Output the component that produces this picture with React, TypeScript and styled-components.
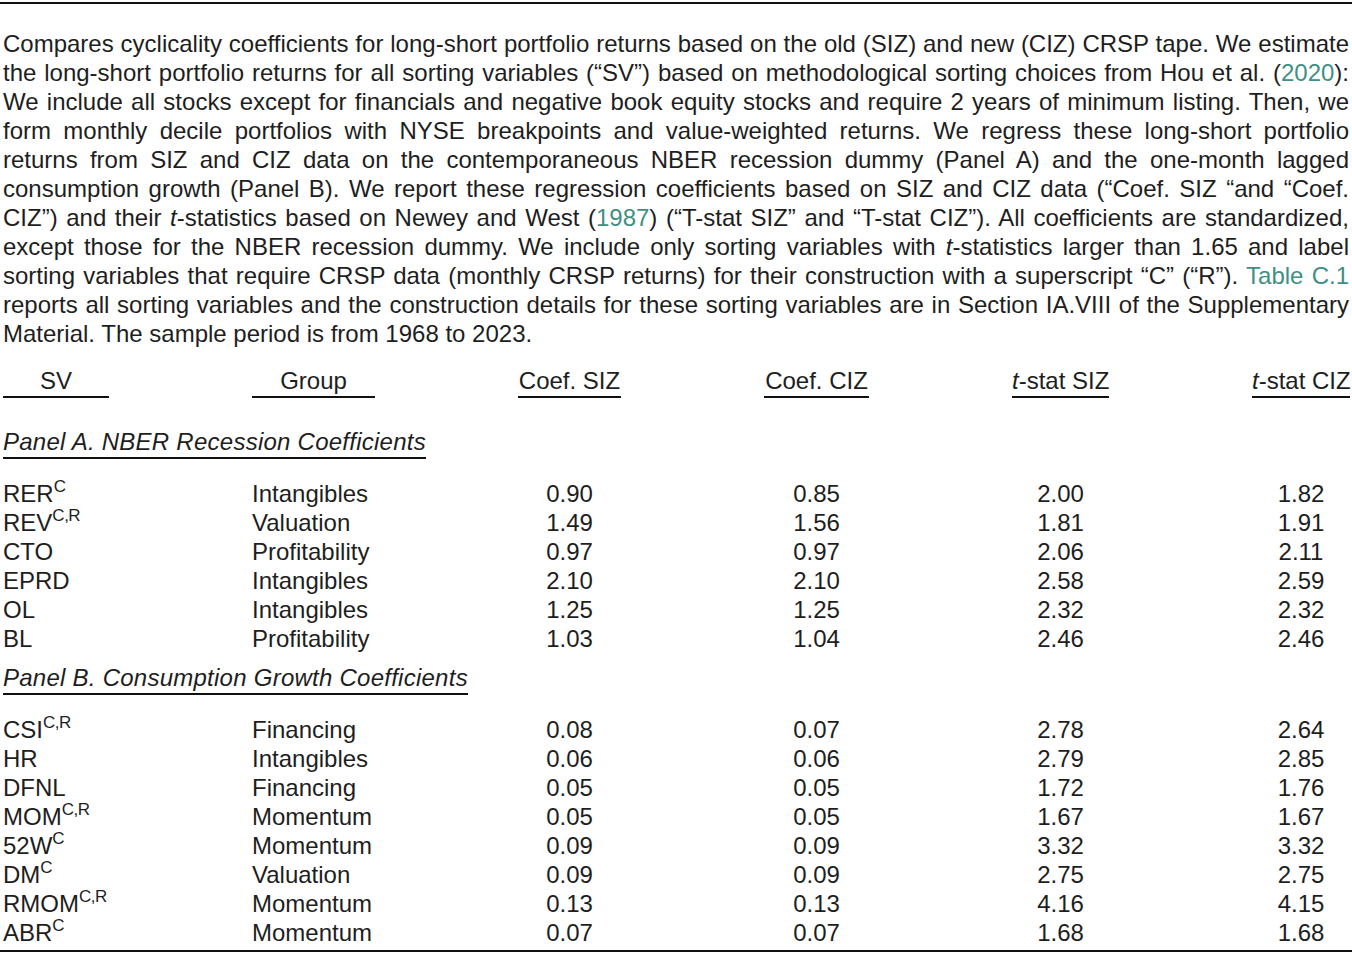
import React from 'react';
import styled, { createGlobalStyle } from 'styled-components';

type Row = {
  sv: string;
  sup?: string;
  group: string;
  values: [string, string, string, string];
};

const panelA: Row[] = [
  { sv: 'RER', sup: 'C', group: 'Intangibles', values: ['0.90', '0.85', '2.00', '1.82'] },
  { sv: 'REV', sup: 'C,R', group: 'Valuation', values: ['1.49', '1.56', '1.81', '1.91'] },
  { sv: 'CTO', group: 'Profitability', values: ['0.97', '0.97', '2.06', '2.11'] },
  { sv: 'EPRD', group: 'Intangibles', values: ['2.10', '2.10', '2.58', '2.59'] },
  { sv: 'OL', group: 'Intangibles', values: ['1.25', '1.25', '2.32', '2.32'] },
  { sv: 'BL', group: 'Profitability', values: ['1.03', '1.04', '2.46', '2.46'] }
];

const panelB: Row[] = [
  { sv: 'CSI', sup: 'C,R', group: 'Financing', values: ['0.08', '0.07', '2.78', '2.64'] },
  { sv: 'HR', group: 'Intangibles', values: ['0.06', '0.06', '2.79', '2.85'] },
  { sv: 'DFNL', group: 'Financing', values: ['0.05', '0.05', '1.72', '1.76'] },
  { sv: 'MOM', sup: 'C,R', group: 'Momentum', values: ['0.05', '0.05', '1.67', '1.67'] },
  { sv: '52W', sup: 'C', group: 'Momentum', values: ['0.09', '0.09', '3.32', '3.32'] },
  { sv: 'DM', sup: 'C', group: 'Valuation', values: ['0.09', '0.09', '2.75', '2.75'] },
  { sv: 'RMOM', sup: 'C,R', group: 'Momentum', values: ['0.13', '0.13', '4.16', '4.15'] },
  { sv: 'ABR', sup: 'C', group: 'Momentum', values: ['0.07', '0.07', '1.68', '1.68'] }
];

function CaptionText() {
  // one entry per printed line so the breaks match the source
  const lines: React.ReactNode[] = [
    <>Compares cyclicality coefficients for long-short portfolio returns based on the old (SIZ) and new (CIZ) CRSP tape. We estimate</>,
    <>
      the long-short portfolio returns for all sorting variables (“SV”) based on methodological sorting choices from Hou et al. (
      <Ref>2020</Ref>):
    </>,
    <>We include all stocks except for financials and negative book equity stocks and require 2 years of minimum listing. Then, we</>,
    <>form monthly decile portfolios with NYSE breakpoints and value-weighted returns. We regress these long-short portfolio</>,
    <>returns from SIZ and CIZ data on the contemporaneous NBER recession dummy (Panel A) and the one-month lagged</>,
    <>consumption growth (Panel B). We report these regression coefficients based on SIZ and CIZ data (“Coef. SIZ “and “Coef.</>,
    <>
      CIZ”) and their <i>t</i>-statistics based on Newey and West (<Ref>1987</Ref>) (“T-stat SIZ” and “T-stat CIZ”). All
      coefficients are standardized,
    </>,
    <>
      except those for the NBER recession dummy. We include only sorting variables with <i>t</i>-statistics larger than 1.65
      and label
    </>,
    <>
      sorting variables that require CRSP data (monthly CRSP returns) for their construction with a superscript “C” (“R”).{' '}
      <Ref>Table C.1</Ref>
    </>,
    <>reports all sorting variables and the construction details for these sorting variables are in Section IA.VIII of the Supplementary</>,
    <>Material. The sample period is from 1968 to 2023.</>
  ];

  return (
    <Caption>
      {lines.map((line, i) => (
        <CaptionLine key={i} $last={i === lines.length - 1}>
          {line}
        </CaptionLine>
      ))}
    </Caption>
  );
}

export default function App() {
  const renderRows = (rows: Row[]) =>
    rows.map(row => (
      <DataRow key={row.sv}>
        <LeftCell>
          {row.sv}
          {row.sup && <Sup>{row.sup}</Sup>}
        </LeftCell>
        <LeftCell>{row.group}</LeftCell>
        {row.values.map((v, i) => (
          <NumCell key={i}>{v}</NumCell>
        ))}
      </DataRow>
    ));

  return (
    <>
      <GlobalStyle />
      <Page>
        <CaptionText />
        <Table>
          <HeaderRow>
            <HeadCell>SV</HeadCell>
            <HeadCell>Group</HeadCell>
            <HeadCell>Coef. SIZ</HeadCell>
            <HeadCell>Coef. CIZ</HeadCell>
            <HeadCell>
              <i>t</i>-stat SIZ
            </HeadCell>
            <HeadCell>
              <i>t</i>-stat CIZ
            </HeadCell>
          </HeaderRow>

          <PanelTitle $first>
            <PanelText>Panel A. NBER Recession Coefficients</PanelText>
          </PanelTitle>
          <RowGroup>{renderRows(panelA)}</RowGroup>

          <PanelTitle>
            <PanelText>Panel B. Consumption Growth Coefficients</PanelText>
          </PanelTitle>
          <RowGroup>{renderRows(panelB)}</RowGroup>
        </Table>
      </Page>
    </>
  );
}

const GlobalStyle = createGlobalStyle`
  html, body {
    margin: 0;
    padding: 0;
    background: #ffffff;
  }
  body {
    font-family: "Liberation Sans", Arial, sans-serif;
    color: #1e1e1e;
  }
`;

const Page = styled.div`
  width: 1352px;
  padding-top: 2px;
  box-sizing: border-box;
  border-bottom: 2px solid #111;
`;

const Caption = styled.div`
  border-top: 2px solid #111;
  padding: 25px 3px 0 3px;
  font-size: 24px;
  line-height: 29px;
`;

const CaptionLine = styled.div<{ $last?: boolean }>`
  text-align: ${p => (p.$last ? 'left' : 'justify')};
  text-align-last: ${p => (p.$last ? 'left' : 'justify')};
`;

const Ref = styled.span`
  color: #3f8f85;
`;

const Table = styled.div`
  padding: 18px 3px 3px 3px;
  font-size: 24px;
  line-height: 29px;
`;

const gridColumns = `
  display: grid;
  grid-template-columns: 106px 123px 103px 105px 97px 98px;
  column-gap: 143px;
`;

const HeaderRow = styled.div`
  ${gridColumns}
`;

const HeadCell = styled.div`
  text-align: center;
  white-space: nowrap;
  padding-bottom: 1px;
  border-bottom: 2px solid #111;
`;

const PanelTitle = styled.div<{ $first?: boolean }>`
  margin-top: ${p => (p.$first ? '29px' : '10px')};
  font-style: italic;
  letter-spacing: 0.25px;
`;

const PanelText = styled.span`
  display: inline-block;
  padding-bottom: 1px;
  border-bottom: 2px solid #111;
`;

const RowGroup = styled.div`
  margin-top: 20px;
`;

const DataRow = styled.div`
  ${gridColumns}
  height: 29px;
`;

const LeftCell = styled.div`
  white-space: nowrap;
`;

const NumCell = styled.div`
  text-align: center;
`;

const Sup = styled.sup`
  font-size: 17px;
  line-height: 0;
  vertical-align: 0;
  position: relative;
  top: -10px;
  letter-spacing: -0.5px;
`;
